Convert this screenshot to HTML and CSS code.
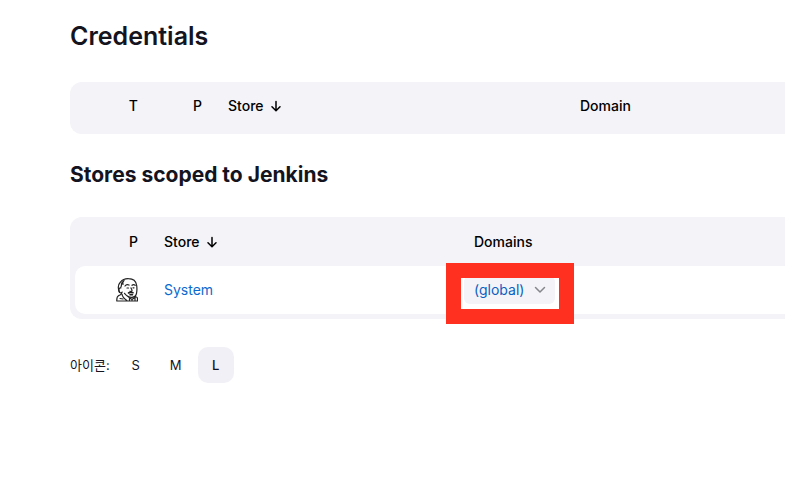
FILE: index.html
```html
<!DOCTYPE html>
<html lang="ko">
<head>
<meta charset="utf-8">
<meta name="viewport" content="width=device-width, initial-scale=1">
<title>Credentials</title>
<link rel="stylesheet" href="styles.css">
</head>
<body>
<main class="page">
  <h1 class="page-title">Credentials</h1>
  <table class="table">
    <colgroup><col class="col-first"><col class="col-icon"><col class="col-store-wide"><col></colgroup>
    <thead>
      <tr>
        <th class="icon-cell" scope="col">T</th>
        <th class="icon-cell" scope="col">P</th>
        <th scope="col">Store<svg class="sort" viewBox="0 0 10 12" aria-hidden="true"><path d="M5 1.500v9M1 6.700l4 4 4-4"/></svg></th>
        <th scope="col">Domain</th>
      </tr>
    </thead>
  </table>

  <h2 class="section-title">Stores scoped to Jenkins</h2>
  <table class="table stores">
    <colgroup><col class="col-first"><col class="col-store"><col></colgroup>
    <thead>
      <tr>
        <th class="icon-cell" scope="col">P</th>
        <th scope="col">Store<svg class="sort" viewBox="0 0 10 12" aria-hidden="true"><path d="M5 1.500v9M1 6.700l4 4 4-4"/></svg></th>
        <th scope="col">Domains</th>
      </tr>
    </thead>
    <tbody>
      <tr>
        <td class="icon-cell">
          <svg class="butler" viewBox="0 0 22 24" role="img" aria-label="Jenkins">
            <path d="M3.500 14.500C2 11 2 6.500 4.500 4 6.500 1.500 9.500.6 12.500.7 16.500.7 20 3 20.700 7.500c.4 3 .3 5.500-.2 8-.5 2-2 3.700-4.500 3.800-3 .2-5.500-1.500-7.500-4"/>
            <path d="M6.500 4C5 5.500 5.800 7 5 9M4.800 10c-2.200-.5-2.500 3-.9 4.500.9.7 1.800.3 2.300-.4M8 2.500C6.800 3.500 6.500 5 7 6.500"/>
            <path d="M9 8c1-1.500 2.500-1.800 4-.9M16 7.300c1-.9 2.200-.8 3.200 0M11 10h1.500M17 9.800h1M15 9.800c.2 1.500 1.500 2 .9 3.200-.5.600-1.400.5-1.900.2"/>
            <path class="thick" d="M12.500 15c1.300-1 2.500-.8 4.500-.2M14 16.800h2.500"/>
            <path d="M5.500 15.500c-.5 1-1.200 1.700-3 2.200C.9 18.500.7 20.500.8 23h20.700v-2.500c0-1-1-1.800-2.500-2M6 16c.2 2.500 2 4.500 4.800 6.500M4 20.500l3 .5"/>
            <path d="M13 19.500l3 2 3.500-2.500M13.500 20v2.500M19 19.500v3M16 21v1.500"/>
          </svg>
        </td>
        <td><a href="#system">System</a></td>
        <td>
          <div class="domain">
            <button class="domain-button" type="button">(global)<svg class="chevron" viewBox="0 0 12 8" aria-hidden="true"><path d="M1.500 1.500L6 6l4.500-4.500"/></svg></button>
            <span class="highlight"></span>
          </div>
        </td>
      </tr>
    </tbody>
  </table>

  <div class="sizes" role="group" aria-labelledby="size-label">
    <span class="size-label" id="size-label">아이콘:</span>
    <button class="size" type="button">S</button>
    <button class="size" type="button">M</button>
    <button class="size selected" type="button" aria-pressed="true">L</button>
  </div>
</main>
</body>
</html>
```
FILE: styles.css
```css
* { box-sizing: border-box; }

body {
  margin: 0;
  background: #fff;
  color: #14141f;
  font: 14px/20px Inter, "Noto Sans CJK KR", sans-serif;
}

.page { padding: 20px 0 20px 70px; }

h1, h2 { margin: 0; }
.page-title { font-size: 25px; font-weight: 600; line-height: 32px; }
.section-title { margin-top: 27px; font-size: 21px; font-weight: 700; line-height: 28px; }

.table {
  width: 100%;
  margin-top: 28px;
  table-layout: fixed;
  border-collapse: separate;
  border-spacing: 0;
  border: solid #f3f3f8;
  border-width: 0 0 5px 5px;
  border-radius: 12px 0 0 12px;
  background: #f3f3f8;
}
.page-title + .table { margin-top: 30px; }

.col-first { width: 73px; }
.col-icon { width: 64px; }
.col-store { width: 310px; }
.col-store-wide { width: 352px; }

th, td {
  height: 48px;
  padding: 0 16px;
  text-align: left;
  vertical-align: middle;
}
th { height: 47px; color: #000; font-weight: 500; }
.stores th { height: 49px; }
td { background: #fff; }
td:first-child { border-radius: 10px 0 0 10px; }
th.icon-cell, td.icon-cell { padding: 0 10px 0 0; text-align: right; }

svg { fill: none; stroke-linecap: round; stroke-linejoin: round; }
.sort {
  width: 10px;
  height: 12px;
  margin-left: 7px;
  stroke: #000;
  stroke-width: 1.500;
  vertical-align: -1px;
}
.butler {
  width: 22px;
  height: 24px;
  stroke: #222;
  stroke-width: 1.200;
  vertical-align: middle;
}
.thick { stroke-width: 1.600; }

a { color: #0b6ad0; text-decoration: none; }

button {
  border: 0;
  font: inherit;
  color: inherit;
  cursor: pointer;
}

.domain {
  position: relative;
  width: max-content;
  margin-left: -10px;
}
.domain-button {
  display: flex;
  align-items: center;
  gap: 10px;
  height: 28px;
  padding: 0 9px 0 10px;
  border-radius: 6px;
  background: #f3f3f8;
  color: #0b5fc0;
}
.chevron {
  width: 12px;
  height: 8px;
  stroke: #85858c;
  stroke-width: 1.500;
}
.highlight {
  position: absolute;
  inset: -13px -19px -20px -18px;
  border: 15px solid #ff3020;
  pointer-events: none;
}

.sizes {
  display: flex;
  align-items: center;
  gap: 4px;
  margin-top: 28px;
  font-size: 13px;
}
.size-label { margin-right: 4px; }
.size {
  width: 36px;
  height: 36px;
  padding: 0;
  border-radius: 10px;
  background: transparent;
}
.selected { background: #f1f0f6; font-weight: 500; }
```
